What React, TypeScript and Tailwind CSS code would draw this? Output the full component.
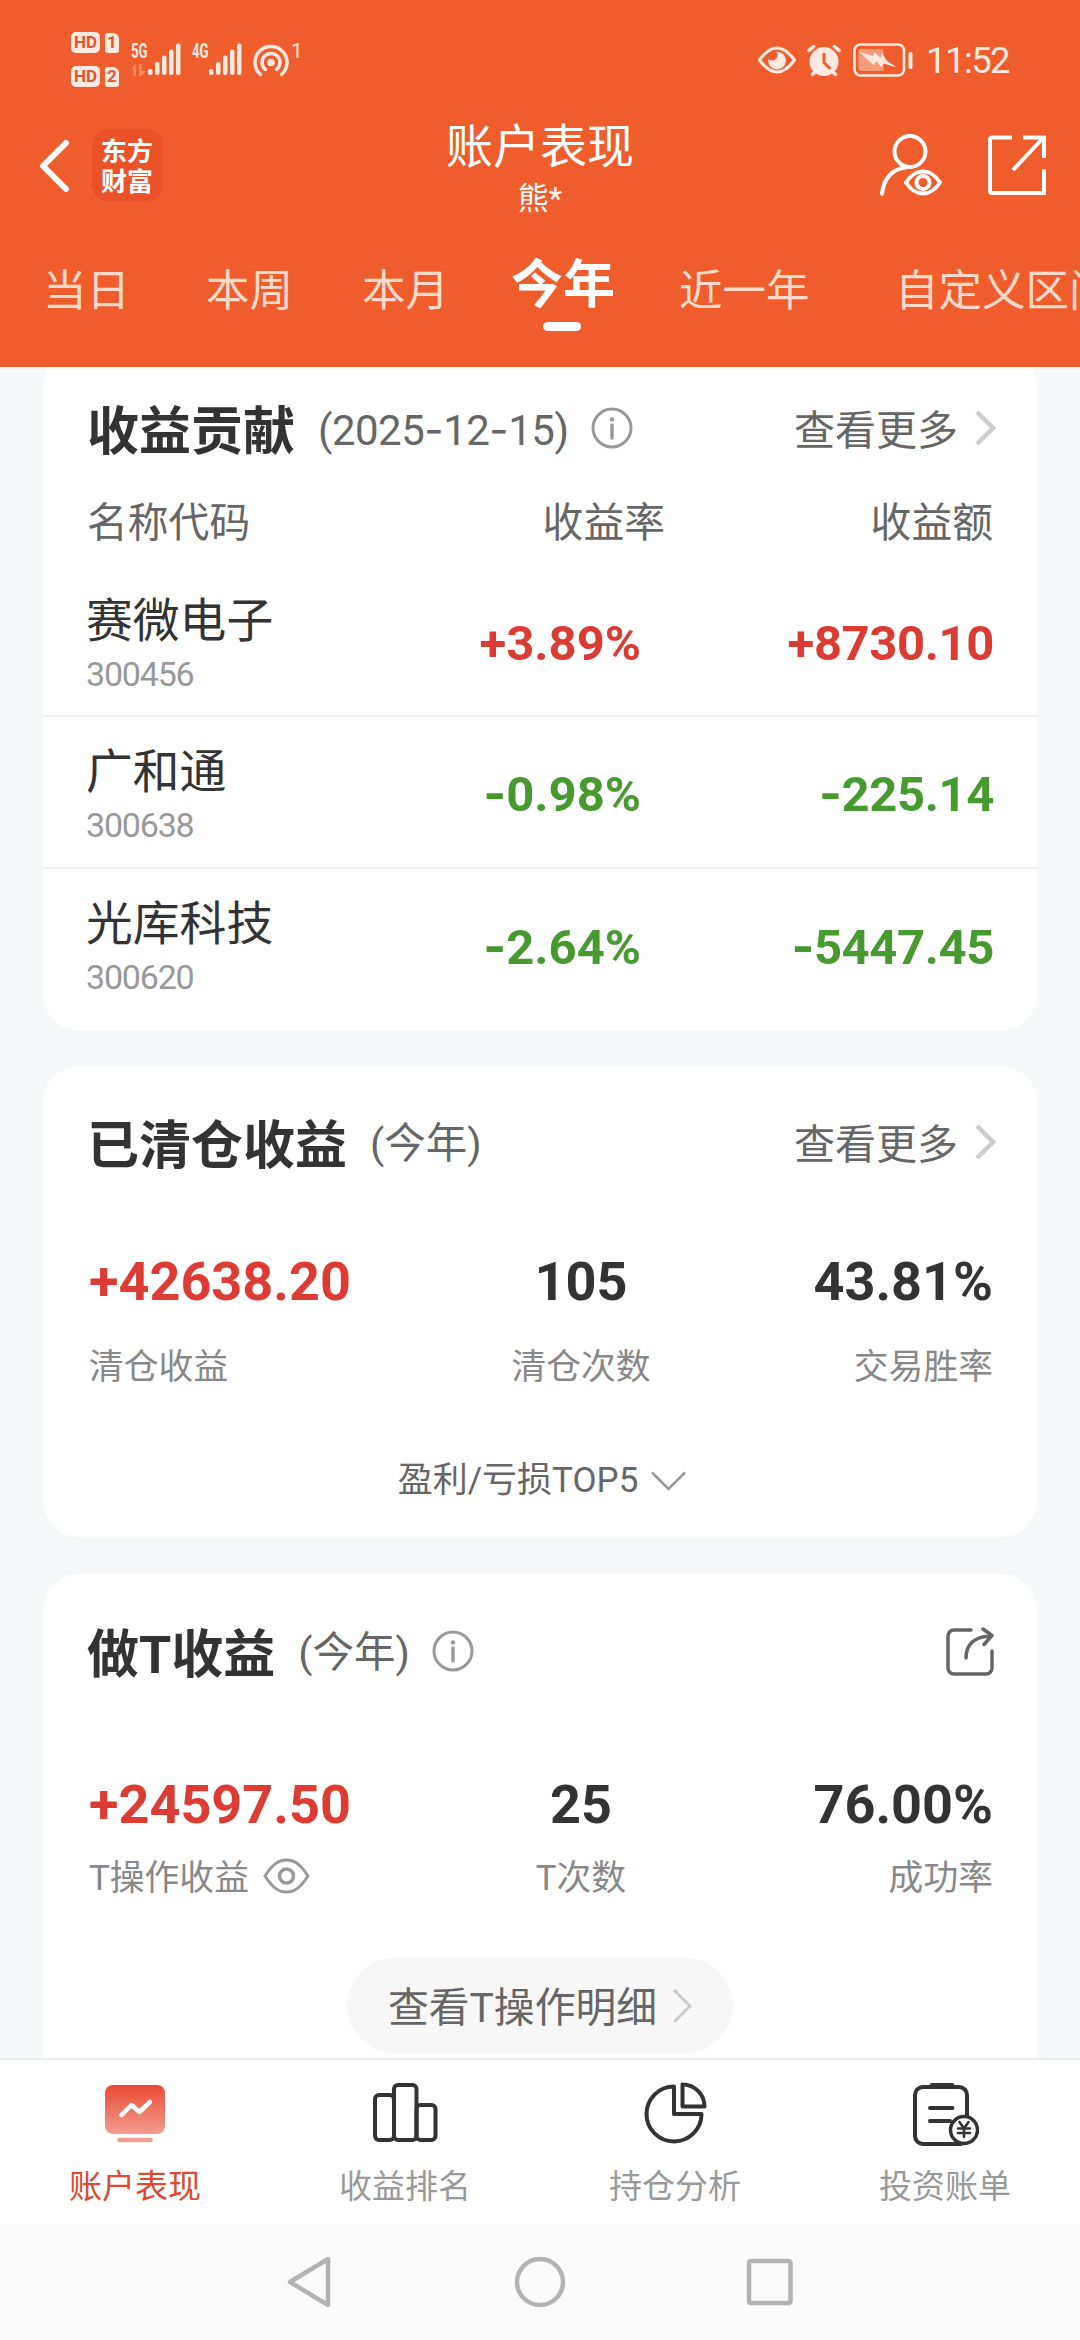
import type { ReactNode } from 'react';

interface Holding {
  name: string;
  code: string;
  rate: string;
  amount: string;
}

interface Stat {
  value: string;
  label: string;
  red?: boolean;
  eye?: boolean;
}

const HOLDINGS: Holding[] = [
  { name: '赛微电子', code: '300456', rate: '+3.89%', amount: '+8730.10' },
  { name: '广和通', code: '300638', rate: '-0.98%', amount: '-225.14' },
  { name: '光库科技', code: '300620', rate: '-2.64%', amount: '-5447.45' },
];

const CLEARED: Stat[] = [
  { value: '+42638.20', label: '清仓收益', red: true },
  { value: '105', label: '清仓次数' },
  { value: '43.81%', label: '交易胜率' },
];

const T_TRADES: Stat[] = [
  { value: '+24597.50', label: 'T操作收益', red: true, eye: true },
  { value: '25', label: 'T次数' },
  { value: '76.00%', label: '成功率' },
];

export default function App() {
  return (
    <div className="flex h-[2340px] w-[1080px] flex-col overflow-hidden bg-[#f7f8fa] font-[Roboto,'Noto_Sans_CJK_SC',sans-serif] text-[#333]">
      <header className="flex h-[367px] shrink-0 flex-col bg-[#ee5d2b]">
        <StatusBar />
        <TitleBar />
        <PeriodTabs />
      </header>

      <main className="flex min-h-0 flex-1 flex-col overflow-hidden px-[43px]">
        <ContributionCard />
        <ClearedCard />
        <TradeCard />
      </main>

      <BottomTabs />
      <SystemNav />
    </div>
  );
}

// ─── Header ──────────────────────────────────────────────────────────────────

function StatusBar() {
  return (
    <div className="flex h-[118px] shrink-0 items-start pr-[71px] pl-[71px] text-[#ffe9e0]">
      <div className="mt-8 flex flex-col gap-[13px]">
        <SimBadge n="1" />
        <SimBadge n="2" />
      </div>
      <div className="mt-[43px] ml-3 flex">
        <div className="w-[17px]">
          <NetLabel>5G</NetLabel>
          <svg width="15" height="12" viewBox="0 0 15 12" className="mt-[4px] fill-[#ff8d66]">
            <path d="M0 5 5 0v12H2.500V5zM8 0h2.500v7H15l-5 5H8z" />
          </svg>
        </div>
        <SignalBars />
        <div className="ml-[10px] w-[17px]">
          <NetLabel>4G</NetLabel>
        </div>
        <SignalBars />
        <svg width="37" height="34" viewBox="0 0 37 34" fill="none" stroke="currentColor" strokeWidth="3.500" strokeLinecap="round" className="ml-[10px]">
          <circle cx="18" cy="19.500" r="3.800" fill="currentColor" stroke="none" />
          <path d="M12.500 26.500a9 9 0 1 1 11 0" />
          <path d="M7.500 31.500a16 16 0 1 1 21 0" />
        </svg>
        <span className="ml-px text-[21px] leading-[16px]">1</span>
      </div>

      <div className="mt-[43px] ml-auto flex items-center">
        <svg width="38" height="28" viewBox="0 0 38 28" fill="none">
          <circle cx="19" cy="14.500" r="9" fill="currentColor" />
          <circle cx="14" cy="9" r="5.500" fill="#ee5d2b" />
          <path d="M1.500 14C8 5 13 2 19 2s11 3 17.500 12C30 23 25 26 19 26S8 23 1.500 14z" stroke="currentColor" strokeWidth="3" />
        </svg>
        <svg width="34" height="33" viewBox="0 0 34 33" className="ml-[11px]">
          <circle cx="17" cy="17.500" r="14.500" fill="currentColor" />
          <path d="M2 6.500 6.500 2.500M32 6.500l-4.500-4M5.500 30.500l4-4M28.500 30.500l-4-4" stroke="currentColor" strokeWidth="3.500" strokeLinecap="round" />
          <path d="M17 10v8.500l5.500 5.500" fill="none" stroke="#ee5d2b" strokeWidth="3" strokeLinecap="round" />
        </svg>
        <svg width="60" height="34" viewBox="0 0 60 34" className="ml-3">
          <rect x="1.500" y="1.500" width="49.500" height="31" rx="6" fill="none" stroke="currentColor" strokeWidth="2.600" />
          <rect x="5.500" y="6" width="25" height="22" rx="2" fill="#f59b7c" />
          <path d="M6.500 9 20 13l1.500-4 6 6 1.500-5 5 8 10 6.500-13.500-4-2 3.500-5.500-6-2 4.500z" fill="currentColor" />
          <rect x="55.500" y="9" width="4" height="17" rx="2" fill="currentColor" />
        </svg>
        <span className="ml-[13px] text-[36.500px] leading-[33px] tracking-[-1.6px]">11:52</span>
      </div>
    </div>
  );
}

function SimBadge({ n }: { n: string }) {
  return (
    <div className="flex items-center gap-[5px] text-[#e2552a]">
      <span className="flex h-[21px] w-[29px] items-center justify-center rounded-[5px] bg-[#ffe9e0] text-[17px] leading-none font-bold">HD</span>
      <span className="flex h-[20px] w-[14px] items-center justify-center rounded-[3px] rounded-tr-[6px] bg-[#ffe9e0] text-[17px] leading-none font-bold">{n}</span>
    </div>
  );
}

function NetLabel({ children }: { children: ReactNode }) {
  return <span className="block origin-left scale-x-[0.66] text-[20px] leading-[17px] font-bold">{children}</span>;
}

function SignalBars() {
  return (
    <svg width="34" height="34" viewBox="0 0 34 34" fill="currentColor">
      <rect x="0" y="26" width="4.500" height="6" rx="2" />
      <rect x="7" y="19" width="4.500" height="13" rx="2" />
      <rect x="14" y="12.500" width="4.500" height="19.500" rx="2" />
      <rect x="21" y="6.500" width="4.500" height="25.500" rx="2" />
      <rect x="28" y="0.500" width="4.500" height="31.500" rx="2" />
    </svg>
  );
}

function TitleBar() {
  return (
    <div className="grid h-[118px] shrink-0 grid-cols-[1fr_auto_1fr] text-white">
      <div className="flex items-start pl-[39px]">
        <svg width="31" height="54" viewBox="0 0 31 54" fill="none" stroke="currentColor" strokeWidth="6" strokeLinecap="round" strokeLinejoin="round" className="mt-[21px]">
          <path d="M27 4 4 27l23 23" />
        </svg>
        <div className="mt-[11px] ml-[22px] flex h-[72px] w-[71px] justify-center rounded-[16px] bg-[#eb5228] pt-[6px]">
          <span className="w-[53px] font-['Noto_Sans_CJK_SC',sans-serif] text-[26px] leading-[30px] font-bold">东方财富</span>
        </div>
      </div>
      <div className="flex flex-col items-center pt-[2px]">
        <h1 className="text-[47px] leading-[54px]">账户表现</h1>
        <span className="mt-[5px] text-[31px] leading-[40px]">熊*</span>
      </div>
      <div className="flex items-start justify-end pr-[34px]">
        <svg width="63" height="62" viewBox="0 0 63 62" fill="none" stroke="currentColor" strokeWidth="4" strokeLinecap="round" className="mt-4">
          <circle cx="31" cy="17.500" r="15.500" />
          <path d="M3 60C4 46 13 34.500 27 33.500" />
          <path d="M27 48.500c5-7.500 9.500-11 17-11s12 3.500 17 11c-5 7.500-9.500 11-17 11s-12-3.500-17-11z" />
          <circle cx="44" cy="48.500" r="6.500" />
        </svg>
        <svg width="58" height="60" viewBox="0 0 58 60" fill="none" stroke="currentColor" strokeWidth="4" className="mt-[17px] ml-[46px]">
          <path d="M24 2.500H4a2 2 0 0 0-2 2V56a2 2 0 0 0 2 2h52V34.500" />
          <path d="M35 2.500h21V23M55.500 2.500 25 35" />
        </svg>
      </div>
    </div>
  );
}

function PeriodTabs() {
  return (
    <nav className="flex flex-1 items-start overflow-hidden pt-[27px] pl-[43px] text-[43.500px] leading-[58px] whitespace-nowrap text-[#ffd9c9]">
      <span className="w-[163px] shrink-0">当日</span>
      <span className="w-[156px] shrink-0">本周</span>
      <span className="w-[149px] shrink-0">本月</span>
      <span className="-mt-[6px] flex w-[168px] shrink-0 flex-col text-[52px] font-bold text-white">
        今年
        <i className="mt-[7px] ml-8 h-[9px] w-[38px] rounded-full bg-white" />
      </span>
      <span className="w-[216px] shrink-0">近一年</span>
      <span className="shrink-0">自定义区间</span>
    </nav>
  );
}

// ─── Cards ───────────────────────────────────────────────────────────────────

function ContributionCard() {
  return (
    <section className="-mt-[18px] h-[682px] shrink-0 rounded-[36px] bg-white pt-[48px]">
      <CardHeader
        title="收益贡献"
        note={
          <span className="text-[42px] tracking-[-0.5px]">
            <Num value="(2025-12-15)" />
          </span>
        }
        info
      >
        <More />
      </CardHeader>

      <div className="mt-[34px] grid grid-cols-[1fr_252px_328px] px-[44px] text-[40.800px] leading-[60px] text-[#666]">
        <span>名称代码</span>
        <span className="text-right">收益率</span>
        <span className="text-right">收益额</span>
      </div>

      <ul className="mt-[13px] divide-y-[2px] divide-[#efefef]">
        {HOLDINGS.map(h => (
          <HoldingRow key={h.code} item={h} />
        ))}
      </ul>
    </section>
  );
}

function HoldingRow({ item }: { item: Holding }) {
  const color = item.rate.startsWith('+') ? 'text-[#da3c33]' : 'text-[#479a30]';
  return (
    <li className="grid h-[151.300px] grid-cols-[1fr_227px_353px] items-center pr-[43px] pl-[44px]">
      <div className="-ml-px flex flex-col pt-[8px]">
        <span className="text-[46.800px] leading-[58px]">{item.name}</span>
        <span className="text-[34px] leading-[48px] tracking-[-1.2px] text-[#999]">{item.code}</span>
      </div>
      <span className={`pt-[5px] text-right text-[49px] leading-none font-bold ${color}`}>
        <Num value={item.rate} />
      </span>
      <span className={`pt-[5px] text-right text-[49px] leading-none font-bold tracking-[-0.4px] ${color}`}>
        <Num value={item.amount} />
      </span>
    </li>
  );
}

function ClearedCard() {
  return (
    <section className="mt-[35px] h-[471px] shrink-0 rounded-[36px] bg-white pt-[45px]">
      <CardHeader title="已清仓收益" note="(今年)">
        <More />
      </CardHeader>
      <StatRow stats={CLEARED} className="mt-[79px] gap-[30px]" />
      <div className="mt-[64px] flex items-center justify-center gap-[13px] pl-1 text-[35px] leading-[50px] text-[#666]">
        盈利/亏损TOP5
        <svg width="35" height="20" viewBox="0 0 35 20" fill="none" stroke="#999" strokeWidth="2.500">
          <path d="m1 1.500 16.500 16.500L34 1.500" />
        </svg>
      </div>
    </section>
  );
}

function TradeCard() {
  return (
    <section className="mt-[37px] h-[600px] shrink-0 rounded-[36px] bg-white pt-[46px]">
      <CardHeader title="做T收益" note="(今年)" info>
        <svg width="48" height="49" viewBox="0 0 48 49" fill="none" stroke="#666" strokeWidth="3.500" strokeLinecap="round" strokeLinejoin="round" className="-mr-px">
          <path d="M25 3H8a6 6 0 0 0-6 6v32a6 6 0 0 0 6 6h32a6 6 0 0 0 6-6V24" />
          <path d="M20 31C20 17 29 9.500 45 9M37 2l9 6.500-8 9" />
        </svg>
      </CardHeader>
      <StatRow stats={T_TRADES} className="mt-[93px] gap-[18px]" />
      <div className="mt-[55px] flex justify-center">
        <button className="flex h-[95px] w-[386px] items-center justify-center gap-[15px] rounded-full bg-[#f7f7f7] text-[40.800px] text-[#666]">
          <span className="pt-[6px]">查看T操作明细</span>
          <svg width="20" height="36" viewBox="0 0 20 36" fill="none" stroke="#ccc" strokeWidth="3">
            <path d="m2 2 16 16L2 34" />
          </svg>
        </button>
      </div>
    </section>
  );
}

function CardHeader({ title, note, info, children }: { title: string; note: ReactNode; info?: boolean; children: ReactNode }) {
  return (
    <div className="flex h-[62px] items-center px-[44px]">
      <h2 className="pt-[9px] text-[52px] leading-[62px] font-bold">{title}</h2>
      <span className="ml-[23px] pt-[4px] text-[41.500px] leading-[62px] text-[#666]">{note}</span>
      {info && <InfoIcon />}
      <div className="ml-auto flex items-center">{children}</div>
    </div>
  );
}

function More() {
  return (
    <span className="-mr-[3px] flex items-center gap-[17px] text-[41px] leading-[62px] text-[#666]">
      <span className="pt-[5px]">查看更多</span>
      <svg width="21" height="36" viewBox="0 0 21 36" fill="none" stroke="#ccc" strokeWidth="4.500">
        <path d="m2 2 16 16L2 34" />
      </svg>
    </span>
  );
}

function InfoIcon() {
  return (
    <svg width="42" height="42" viewBox="0 0 42 42" fill="none" stroke="#999" strokeWidth="3" strokeLinecap="round" className="ml-[22px]">
      <circle cx="21" cy="21" r="19" />
      <path d="M21 18v13" strokeWidth="3.500" />
      <circle cx="21" cy="12.500" r="2.200" fill="#999" stroke="none" />
    </svg>
  );
}

function StatRow({ stats, className }: { stats: Stat[]; className: string }) {
  return (
    <div className="grid grid-cols-[342px_300px_1fr] pr-[44px] pl-[46px]">
      {stats.map((s, i) => (
        <div
          key={s.label}
          className={`flex flex-col ${className} ${i === 1 ? 'items-center' : i === 2 ? 'items-end' : 'items-start'}`}
        >
          <span className={`text-[54px] leading-[60px] font-bold ${s.red ? 'text-[#dc3c33]' : ''}`}>{s.value}</span>
          <span className="flex h-[50px] items-center text-[34.800px] leading-[50px] text-[#888]">
            {s.label}
            {s.eye && (
              <svg width="47" height="36" viewBox="0 0 47 36" fill="none" stroke="#999" strokeWidth="3" className="mb-1 ml-[14px]">
                <path d="M2 18C9 7 15 2 23.500 2S38 7 45 18c-7 11-13 16-21.500 16S9 29 2 18z" />
                <circle cx="23.500" cy="18" r="7" strokeWidth="3.500" />
              </svg>
            )}
          </span>
        </div>
      ))}
    </div>
  );
}

// Roboto's hyphen is too short next to its figures, so it borrows Inter's.
function Num({ value }: { value: string }) {
  return (
    <>
      {value.split(/(-)/).map((part, i) =>
        part === '-' ? <span key={i} className="font-[Inter,sans-serif]">-</span> : part,
      )}
    </>
  );
}

// ─── Bottom bars ─────────────────────────────────────────────────────────────

function BottomTabs() {
  return (
    <nav className="grid h-[166px] shrink-0 grid-cols-4 border-t-2 border-[#ececec] bg-white text-[33px] leading-[46px] text-[#999]">
      <BottomTab label="账户表现" active>
        <defs>
          <linearGradient id="screen" x1="0" y1="0" x2="0" y2="1">
            <stop offset="0" stopColor="#ea4b33" />
            <stop offset="1" stopColor="#f29c8f" />
          </linearGradient>
        </defs>
        <rect x="4" y="5" width="60" height="49" rx="8" fill="url(#screen)" stroke="none" />
        <path d="m20.500 35 10-10 8 7 10.500-10" stroke="#fff" strokeWidth="4.500" />
        <path d="M18.500 60h31" stroke="#eb9f92" strokeWidth="4.500" />
      </BottomTab>
      <BottomTab label="收益排名">
        <rect x="4" y="15" width="19" height="45" rx="4" />
        <rect x="23" y="5" width="22.500" height="55" rx="4" />
        <rect x="45.500" y="25" width="19" height="35" rx="4" />
      </BottomTab>
      <BottomTab label="持仓分析">
        <path d="M33 6.500V34H60.500A27.500 27.500 0 1 1 33 6.500z" />
        <path d="M41.500 4.500v22h22A22 22 0 0 0 41.500 4.500z" />
      </BottomTab>
      <BottomTab label="投资账单">
        <path d="M56 36V15a8 8 0 0 0-8-8h-36a8 8 0 0 0-8 8v41a8 8 0 0 0 8 8h38" />
        <path d="M21 5.500h20" strokeWidth="5" />
        <path d="M19 28h22.500M19 41h20" />
        <circle cx="53" cy="50" r="13.500" fill="#fff" strokeWidth="3.500" />
        <path d="m48.500 42 4.500 6.500 4.500-6.500M53 48.500V57M47 48.500h12M47 53h12" strokeWidth="2.600" />
      </BottomTab>
    </nav>
  );
}

function BottomTab({ label, active, children }: { label: string; active?: boolean; children: ReactNode }) {
  return (
    <div className={`flex flex-col items-center pt-5 ${active ? 'text-[#dc4a32]' : ''}`}>
      <svg width="68" height="68" viewBox="0 0 68 68" fill="none" stroke="#333" strokeWidth="4" strokeLinecap="round" strokeLinejoin="round">
        {children}
      </svg>
      <span className="mt-[16px]">{label}</span>
    </div>
  );
}

function SystemNav() {
  return (
    <div className="flex h-[116px] shrink-0 items-center justify-center gap-[180px] bg-[#fbfbfb]">
      <svg width="50" height="52" viewBox="0 0 50 52" fill="none" stroke="#b3b3b3" strokeWidth="4.500" strokeLinejoin="round">
        <path d="M43 3v46L5 26z" />
      </svg>
      <svg width="50" height="52" viewBox="0 0 50 52" fill="none" stroke="#b3b3b3" strokeWidth="4.500">
        <circle cx="25" cy="26" r="23" />
      </svg>
      <svg width="50" height="52" viewBox="0 0 50 52" fill="none" stroke="#b3b3b3" strokeWidth="4.500">
        <rect x="4" y="5" width="41.500" height="42" rx="2" />
      </svg>
    </div>
  );
}
